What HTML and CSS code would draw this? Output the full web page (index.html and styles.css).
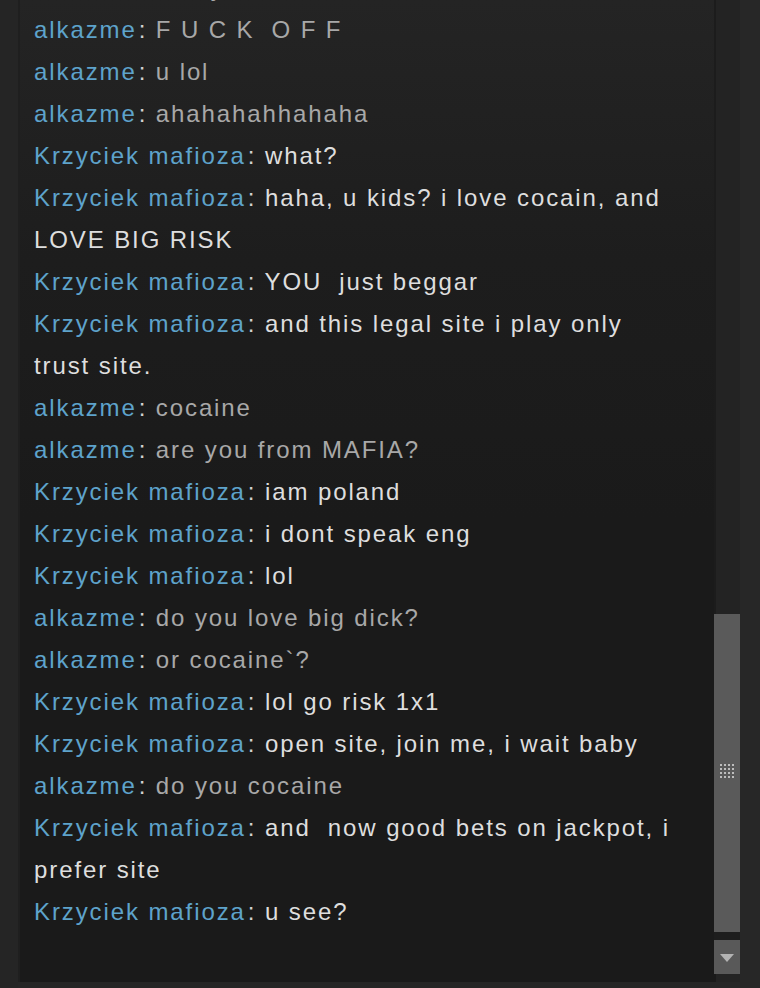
FILE: index.html
```html
<!DOCTYPE html>
<html lang="en">
<head>
<meta charset="utf-8">
<title>Chat</title>
<link rel="stylesheet" href="styles.css">
</head>
<body>
<div class="frame">
  <div class="gutter"></div>
  <div class="chat">
    <div class="msg"><span class="name">alkazme</span><span class="colon">:</span> <span class="text gray">really</span></div>
    <div class="msg"><span class="name">alkazme</span><span class="colon">:</span> <span class="text gray">F U C K  O F F</span></div>
    <div class="msg"><span class="name">alkazme</span><span class="colon">:</span> <span class="text gray">u lol</span></div>
    <div class="msg"><span class="name">alkazme</span><span class="colon">:</span> <span class="text gray">ahahahahhahaha</span></div>
    <div class="msg"><span class="name">Krzyciek mafioza</span><span class="colon">:</span> <span class="text">what?</span></div>
    <div class="msg"><span class="name">Krzyciek mafioza</span><span class="colon">:</span> <span class="text">haha, u kids? i love cocain, and LOVE BIG RISK</span></div>
    <div class="msg"><span class="name">Krzyciek mafioza</span><span class="colon">:</span> <span class="text">YOU  just beggar</span></div>
    <div class="msg"><span class="name">Krzyciek mafioza</span><span class="colon">:</span> <span class="text">and this legal site i play only<br>trust site.</span></div>
    <div class="msg"><span class="name">alkazme</span><span class="colon">:</span> <span class="text gray">cocaine</span></div>
    <div class="msg"><span class="name">alkazme</span><span class="colon">:</span> <span class="text gray">are you from MAFIA?</span></div>
    <div class="msg"><span class="name">Krzyciek mafioza</span><span class="colon">:</span> <span class="text">iam poland</span></div>
    <div class="msg"><span class="name">Krzyciek mafioza</span><span class="colon">:</span> <span class="text">i dont speak eng</span></div>
    <div class="msg"><span class="name">Krzyciek mafioza</span><span class="colon">:</span> <span class="text">lol</span></div>
    <div class="msg"><span class="name">alkazme</span><span class="colon">:</span> <span class="text gray">do you love big dick?</span></div>
    <div class="msg"><span class="name">alkazme</span><span class="colon">:</span> <span class="text gray">or cocaine`?</span></div>
    <div class="msg"><span class="name">Krzyciek mafioza</span><span class="colon">:</span> <span class="text">lol go risk 1x1</span></div>
    <div class="msg"><span class="name">Krzyciek mafioza</span><span class="colon">:</span> <span class="text">open site, join me, i wait baby</span></div>
    <div class="msg"><span class="name">alkazme</span><span class="colon">:</span> <span class="text gray">do you cocaine</span></div>
    <div class="msg"><span class="name">Krzyciek mafioza</span><span class="colon">:</span> <span class="text">and  now good bets on jackpot, i prefer site</span></div>
    <div class="msg"><span class="name">Krzyciek mafioza</span><span class="colon">:</span> <span class="text">u see?</span></div>
  </div>
  <div class="scrollbar">
    <div class="track"></div>
    <div class="thumb">
      <svg class="grip" width="14" height="14" viewBox="0 0 14 14" aria-hidden="true">
        <g fill="#bdbdbd">
          <rect x="0" y="0" width="2" height="2"/><rect x="4" y="0" width="2" height="2"/><rect x="8" y="0" width="2" height="2"/><rect x="12" y="0" width="2" height="2"/>
          <rect x="0" y="4" width="2" height="2"/><rect x="4" y="4" width="2" height="2"/><rect x="8" y="4" width="2" height="2"/><rect x="12" y="4" width="2" height="2"/>
          <rect x="0" y="8" width="2" height="2"/><rect x="4" y="8" width="2" height="2"/><rect x="8" y="8" width="2" height="2"/><rect x="12" y="8" width="2" height="2"/>
          <rect x="0" y="12" width="2" height="2"/><rect x="4" y="12" width="2" height="2"/><rect x="8" y="12" width="2" height="2"/><rect x="12" y="12" width="2" height="2"/>
        </g>
      </svg>
    </div>
    <div class="sb-gap"></div>
    <div class="sb-button">
      <svg width="14" height="8" viewBox="0 0 14 8" aria-hidden="true"><polygon points="0,0 14,0 7,8" fill="#b3b3b3"/></svg>
    </div>
    <div class="sb-end"></div>
  </div>
  <div class="gutter-right"></div>
</div>
</body>
</html>
```

FILE: styles.css
```css
html, body {
  margin: 0;
  padding: 0;
  background: #262626;
  overflow: hidden;
}

.frame {
  display: flex;
  height: 988px;
  align-items: flex-start;
}

.gutter {
  width: 18px;
  height: 988px;
  flex: none;
  background: #252525;
}

.chat {
  width: 696px;
  height: 982px;
  flex: none;
  box-sizing: border-box;
  border-left: 2px solid #1f1f1f;
  background: linear-gradient(to bottom, #242424 0px, #1d1d1d 260px, #1a1a1a 520px, #1a1a1a 100%);
  overflow: hidden;
  display: flex;
  flex-direction: column;
  justify-content: flex-end;
  padding: 0 14px 49px 14px;
  font-family: "Liberation Sans", Arial, Helvetica, sans-serif;
  font-size: 24px;
  letter-spacing: 1.9px;
  line-height: 42px;
}

.msg {
  flex: none;
  white-space: pre-wrap;
  color: #dcdcdc;
}

.name {
  color: #5ea3cb;
  margin-right: 2px;
}

.colon {
  color: #d2d2d2;
}

.text {
  color: #dedede;
}

.text.gray {
  color: #a8a8a8;
}

.scrollbar {
  width: 26px;
  height: 982px;
  flex: none;
  display: flex;
  flex-direction: column;
  background: #232323;
}

.track {
  flex: 1;
  border-left: 2px solid #1c1c1c;
}

.thumb {
  height: 318px;
  flex: none;
  background: #5a5a5a;
  display: flex;
  justify-content: center;
  align-items: flex-start;
  padding-top: 150px;
  box-sizing: border-box;
}

.grip {
  display: block;
}

.sb-gap {
  height: 8px;
  flex: none;
  background: #1d1d1d;
}

.sb-button {
  height: 34px;
  flex: none;
  background: #595959;
  display: flex;
  justify-content: center;
  align-items: flex-start;
  padding-top: 14px;
  box-sizing: border-box;
}

.sb-button svg {
  display: block;
}

.sb-end {
  height: 8px;
  flex: none;
  border-left: 2px solid #1a1a1a;
}

.gutter-right {
  width: 20px;
  height: 988px;
  flex: none;
  background: #272727;
}
```
